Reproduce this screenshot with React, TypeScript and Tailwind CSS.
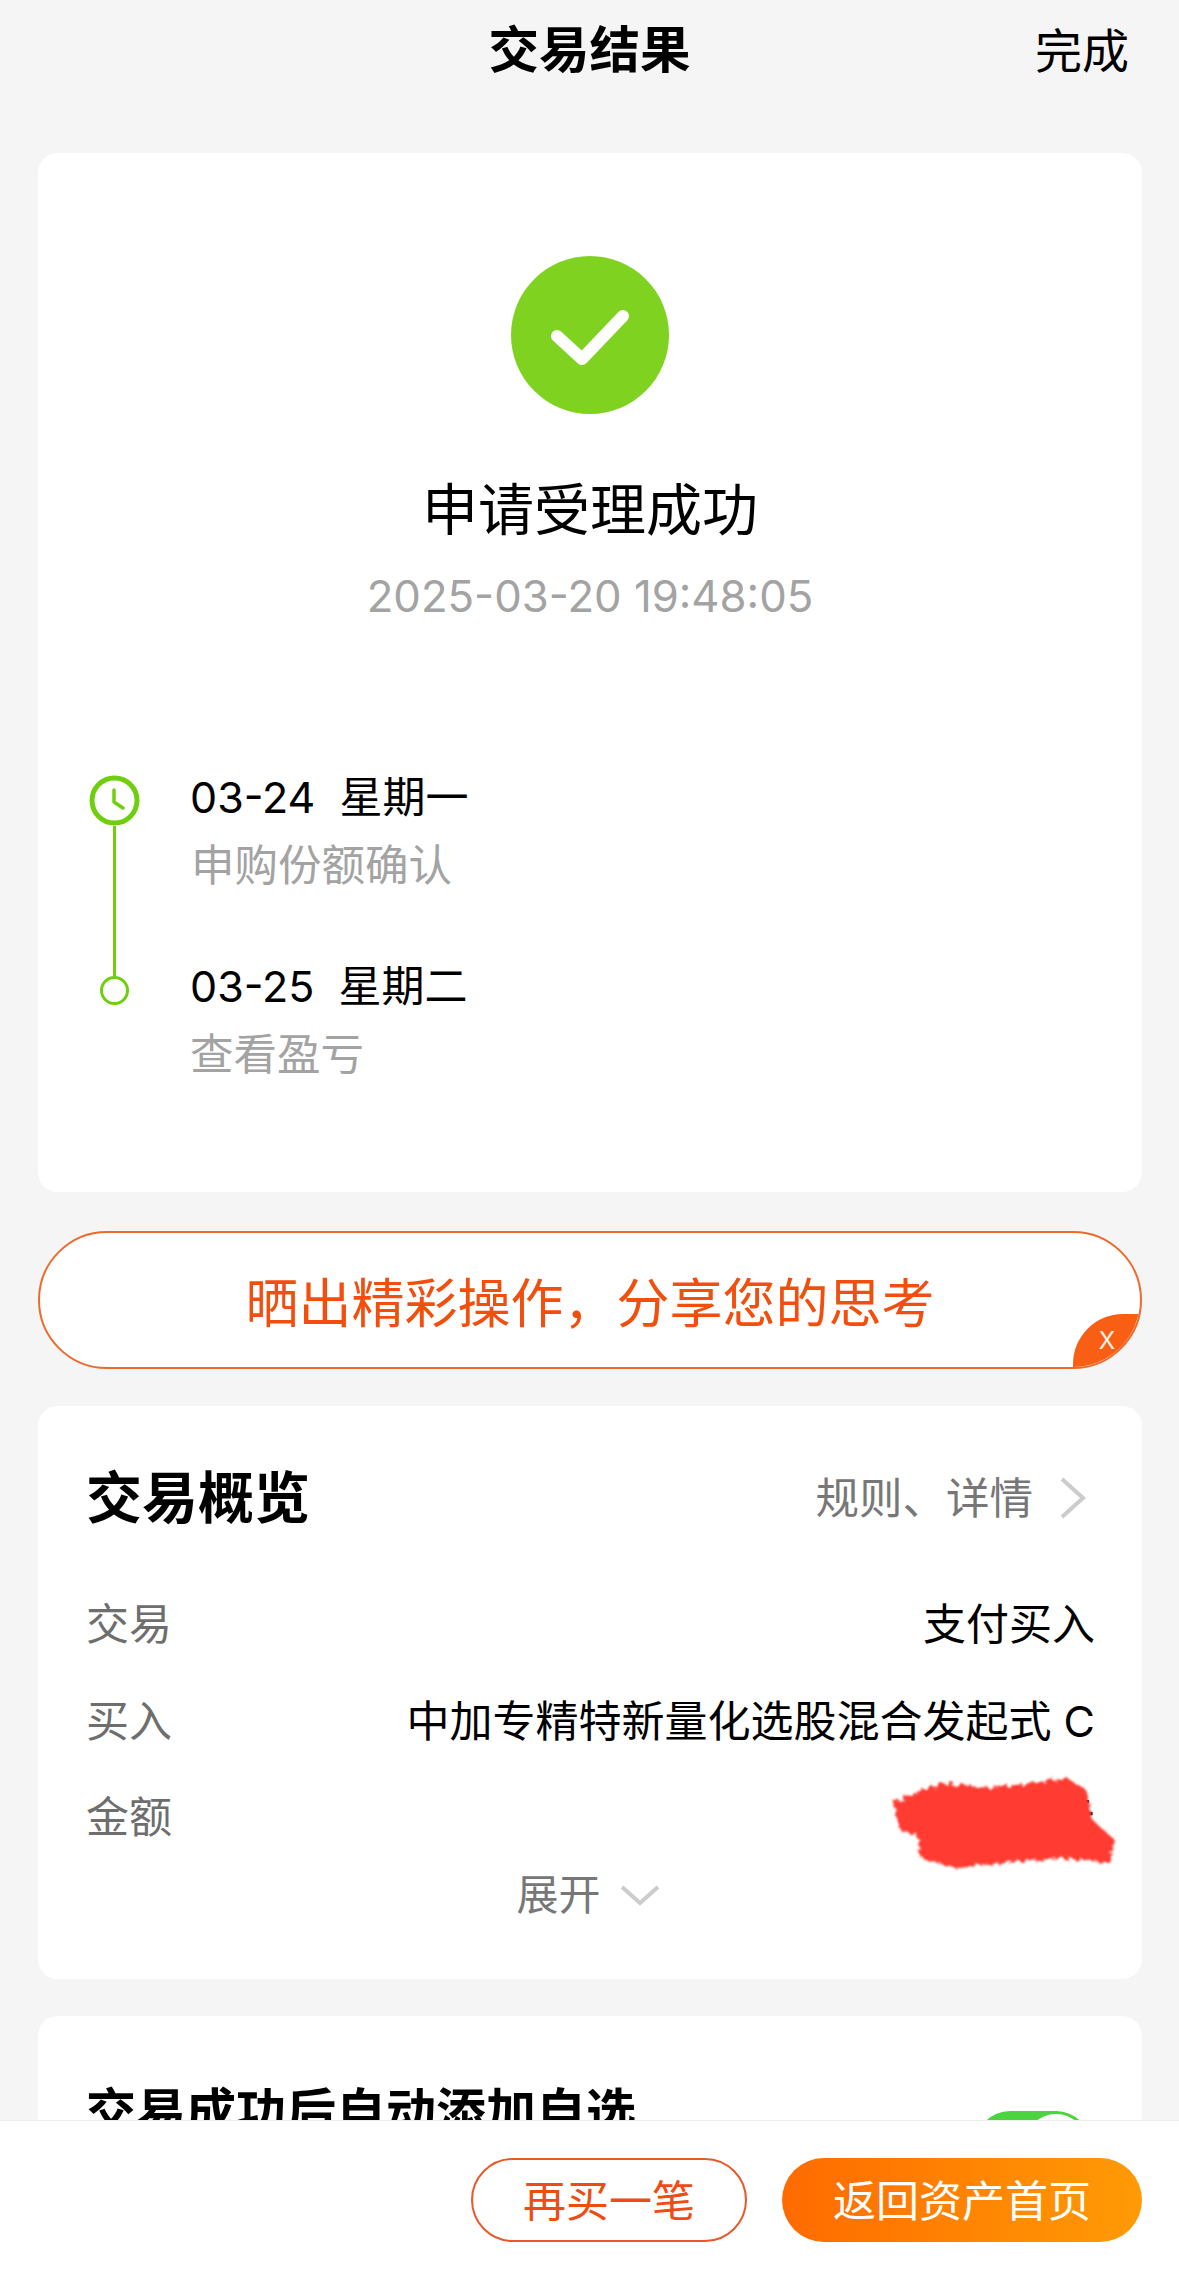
import React from "react";

const cjk = "font-['Inter','Noto_Sans_CJK_SC',sans-serif]";

const SuccessIcon = () => (
  <svg width="158" height="158" viewBox="0 0 158 158">
    <circle cx="79" cy="79" r="79" fill="#7fd320" />
    <path d="M46 80 L71 103 L112 60" fill="none" stroke="#fff" strokeWidth="12" strokeLinecap="round" strokeLinejoin="round" />
  </svg>
);

const ClockIcon = () => (
  <svg width="51" height="51" viewBox="0 0 51 51" className="shrink-0">
    <circle cx="25.5" cy="25.5" r="22.5" fill="#fff" stroke="#6fcf0e" strokeWidth="5" />
    <path d="M25 15 V27 L34 33" fill="none" stroke="#6fcf0e" strokeWidth="3.5" strokeLinecap="round" strokeLinejoin="round" />
  </svg>
);

const Chevron = ({ dir }: { dir: "right" | "down" }) =>
  dir === "right" ? (
    <svg width="27" height="42" viewBox="0 0 27 42">
      <path d="M3 2 L24 21 L3 40" fill="none" stroke="#cccccc" strokeWidth="4" />
    </svg>
  ) : (
    <svg width="40" height="22" viewBox="0 0 40 22">
      <path d="M2 3 L20 19 L38 3" fill="none" stroke="#cccccc" strokeWidth="4" />
    </svg>
  );

const Scribble = () => (
  <svg width="240" height="108" viewBox="0 0 240 108" className="absolute left-[884px] top-[1769px]">
    <defs>
      <filter id="rough" x="-10%" y="-10%" width="120%" height="120%">
        <feTurbulence type="fractalNoise" baseFrequency="0.2" numOctaves="3" seed="4" />
        <feDisplacementMap in="SourceGraphic" scale="10" />
        <feGaussianBlur stdDeviation="1" />
      </filter>
    </defs>
    <path
      d="M9 33 L56 14 L109 19 L183 9 L201 20 L204 30 L208 50 L216 58 L231 71 L226 94 L176 89 L69 99 L36 88 L34 66 L16 61 Z"
      fill="#ff3b30"
      filter="url(#rough)"
    />
  </svg>
);

const rows = [
  { label: "交易", value: "支付买入" },
  { label: "买入", value: "中加专精特新量化选股混合发起式 C" },
  { label: "金额", value: "元" },
];

export default function App() {
  return (
    <div className={`relative h-[2291px] w-[1179px] overflow-hidden bg-[#f5f5f5] text-black ${cjk}`}>
      <header className="relative flex h-[100px] items-center justify-center">
        <span className="text-[50.5px] leading-[60px] font-semibold">交易结果</span>
        <span className="absolute right-[50px] top-[21px] text-[47px] leading-[60px]">完成</span>
      </header>

      <main className="mt-[53px] mr-[37px] ml-[38px] flex flex-col">
        <section className="flex h-[1039px] flex-col rounded-[20px] bg-white pt-[103px]">
          <div className="flex justify-center">
            <SuccessIcon />
          </div>
          <h1 className="mt-[61px] text-center text-[56px] leading-[70px] font-normal">申请受理成功</h1>
          <p className="mt-[22px] text-center text-[43.7px] leading-[60px] text-[#a3a3a3]">2025-03-20 19:48:05</p>

          <div className="mt-[143px] ml-[51px] flex gap-[50px]">
            <div className="flex w-[51px] flex-col items-center pt-[5px]">
              <ClockIcon />
              <div className="h-[150px] w-[3px] bg-[#6fcf0e]" />
              <div className="h-[29px] w-[29px] rounded-full border-[3px] border-[#6fcf0e]" />
            </div>
            <div className="flex flex-col">
              <p className="text-[43px] leading-[54px]">03-24&nbsp; 星期一</p>
              <p className="mt-[14px] ml-[1px] text-[43.5px] leading-[54px] text-[#a3a3a3]">申购份额确认</p>
              <p className="mt-[67px] text-[43px] leading-[54px]">03-25&nbsp; 星期二</p>
              <p className="mt-[14px] text-[43.5px] leading-[54px] text-[#a3a3a3]">查看盈亏</p>
            </div>
          </div>
        </section>

        <section className="relative mt-[39px] flex h-[138px] items-center justify-center overflow-hidden rounded-[69px] border-2 border-[#ee6a2c] bg-white pt-[7px]">
          <span className="text-[53px] leading-[70px] text-[#f24e0e]">晒出精彩操作，分享您的思考</span>
          <span className="absolute right-0 bottom-0 flex h-[53px] w-[67px] items-center justify-center rounded-tl-[50px] bg-[#f95f14] pl-[1px] text-[24px] leading-[30px] text-[#fff3e8]">
            X
          </span>
        </section>

        <section className="mt-[37px] flex h-[573px] flex-col rounded-[20px] bg-white pr-[47px] pl-[48px] pt-[62px]">
          <div className="flex items-center justify-between">
            <h2 className="text-[56px] leading-[60px] font-bold">交易概览</h2>
            <div className="flex items-center gap-[26px] pr-[9px] text-[43.5px] leading-[60px] text-[#777777]">
              <span>规则、详情</span>
              <Chevron dir="right" />
            </div>
          </div>
          <div className="mt-[66px] flex flex-col gap-[36.5px]">
            {rows.map((row) => (
              <div key={row.label} className="flex items-center justify-between text-[43px] leading-[60px]">
                <span className="text-[#6e6e6e]">{row.label}</span>
                <span>{row.value}</span>
              </div>
            ))}
          </div>
          <div className="mt-[18px] flex items-center justify-center gap-[19px] pr-[5px] text-[42px] leading-[60px] text-[#777777]">
            <span>展开</span>
            <Chevron dir="down" />
          </div>
        </section>

        <section className="mt-[37px] flex h-[200px] items-start justify-between rounded-[20px] bg-white pr-[51px] pl-[48px] pt-[66px]">
          <h2 className="text-[50px] leading-[60px] font-bold">交易成功后自动添加自选</h2>
          <div className="mt-[29px] flex h-[70px] w-[116px] items-center justify-end rounded-full bg-[#4cd440] pr-[3px]">
            <div className="h-[64px] w-[64px] rounded-full bg-white" />
          </div>
        </section>
      </main>

      <Scribble />

      <footer className="absolute inset-x-0 bottom-0 flex h-[171px] items-start justify-end gap-[35px] border-t border-[#ececec] bg-white pt-[37px] pr-[37px]">
        <button className="flex h-[84px] w-[276px] items-center justify-center rounded-[42px] border-2 border-[#e9582a] pt-[3px] text-[43px] text-[#ef4c12]">
          再买一笔
        </button>
        <button className="flex h-[84px] w-[360px] items-center justify-center rounded-[42px] bg-gradient-to-r from-[#ff6a00] to-[#ff9a05] pt-[3px] text-[43px] text-white">
          返回资产首页
        </button>
      </footer>
    </div>
  );
}
